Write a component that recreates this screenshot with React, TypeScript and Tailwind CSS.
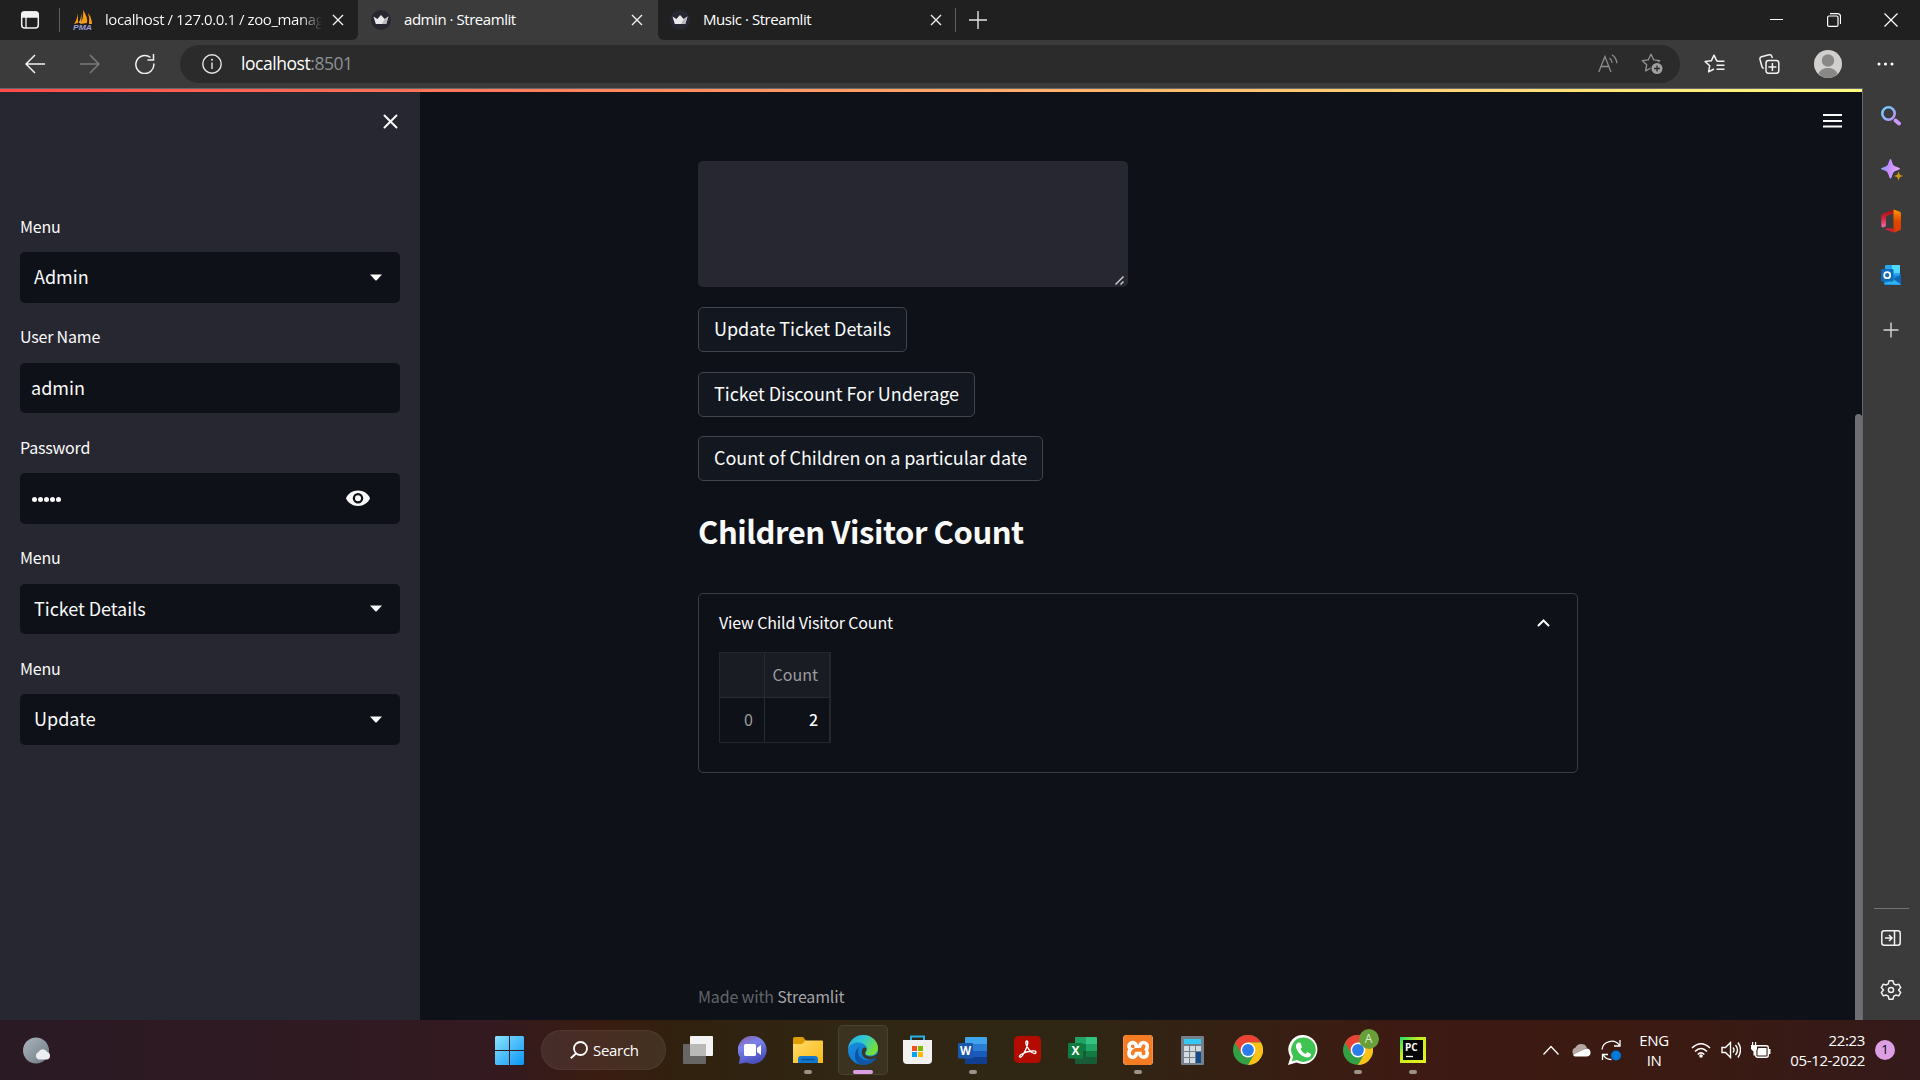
import React from "react";
import { SiXampp } from "react-icons/si";

type IconProps = { w: number; h: number; vb?: string; className?: string; children: React.ReactNode };

function Icon({ w, h, vb, className = "", children }: IconProps) {
  return (
    <svg width={w} height={h} viewBox={vb ?? `0 0 ${w} ${h}`} fill="none" className={`block shrink-0 ${className}`}>
      {children}
    </svg>
  );
}

function Crown() {
  return (
    <Icon w={20} h={20}>
      <circle cx="10" cy="10" r="10" fill="#262730" />
      <path d="M2.500 6.500 6.300 9 10 5l3.700 4 3.800-2.500-2.300 7.500H4.800Z" fill="#e9e9ec" />
      <path d="M13.700 9l3.800-2.500-2.300 7.500H11Z" fill="#b9b9be" />
    </Icon>
  );
}

function TabClose() {
  return (
    <Icon w={12} h={12}>
      <path d="M1 1l10 10M11 1L1 11" stroke="#f0f0f0" strokeWidth="1.400" />
    </Icon>
  );
}

function PmaIcon() {
  return (
    <Icon w={20} h={20}>
      <path d="M5 3v10L1 14Q4 10 5 3ZM10 0q5 7 4 13l-7 1Q11 8 10 0ZM15 3q4 5 4 11h-3q1-6-1-11Z" fill="#f89c0e" />
      <path d="M8.500 3v10H5.500Q8 9 8.500 3Z" fill="#d9a25a" />
      <text x="0" y="19.500" fontSize="8" fontWeight="700" fontStyle="italic" textLength="19" lengthAdjust="spacingAndGlyphs" fill="#9a9ed8" fontFamily="Liberation Sans">PMA</text>
    </Icon>
  );
}

function TabStrip() {
  return (
    <div className="flex h-10 shrink-0 items-center bg-[#3b3b3b]">
      <div className="flex h-10 w-[358px] items-center rounded-br-md bg-[#202020] pl-5">
        <Icon w={20} h={20}>
          <rect x="1.700" y="2" width="16.600" height="16" rx="3" stroke="#f2f2f2" strokeWidth="1.500" />
          <path d="M2 3.500Q2 2 4 2h12q2 0 2 2v3H2ZM6 7v11" fill="#f2f2f2" stroke="#f2f2f2" strokeWidth="1.300" />
        </Icon>
        <div className="ml-[19px] h-6 w-px bg-[#5f5f5f]" />
        <div className="ml-[13px]"><PmaIcon /></div>
        <div className="ml-3 w-[217px] whitespace-nowrap bg-gradient-to-r from-white from-90% to-transparent bg-clip-text pb-[2px] text-[15px] leading-6 tracking-[-0.42px] text-transparent">
          localhost / 127.0.0.1 / zoo_mana<span className="tracking-[-1px]">g</span>
        </div>
        <div className="ml-[10px]"><TabClose /></div>
      </div>
      <div className="flex h-10 w-[300px] items-center rounded-t-lg bg-[#3b3b3b] pl-[13px]">
        <Crown />
        <div className="ml-[13px] w-[227px] whitespace-nowrap pb-[2px] text-[15px] leading-6 tracking-[-0.45px] text-white">admin · Streamlit</div>
        <TabClose />
      </div>
      <div className="flex h-10 flex-1 items-center rounded-bl-md bg-[#202020] pl-[12px]">
        <Crown />
        <div className="ml-[13px] w-[227px] whitespace-nowrap pb-[2px] text-[15px] leading-6 tracking-[-0.45px] text-white">Music · Streamlit</div>
        <TabClose />
        <div className="ml-[13px] h-6 w-px bg-[#5f5f5f]" />
        <Icon w={18} h={18} className="ml-[13px]">
          <path d="M9 0v18M0 9h18" stroke="#e4e4e4" strokeWidth="1.400" />
        </Icon>
        <div className="ml-auto mr-[22px] flex items-center gap-[43px]">
          <Icon w={14} h={14}><path d="M0 6.500h13" stroke="#fff" /></Icon>
          <Icon w={14} h={14}>
            <rect x=".6" y="3" width="10.400" height="10.400" rx="1.500" stroke="#fff" strokeWidth="1.200" />
            <path d="M3 .6h7.500q3 0 3 3V11" stroke="#fff" strokeWidth="1.200" />
          </Icon>
          <Icon w={14} h={14}><path d="M.5.500l13 13M13.500.500l-13 13" stroke="#fff" strokeWidth="1.200" /></Icon>
        </div>
      </div>
    </div>
  );
}

const STAR = "M10 1.200l2.700 5.600 6.100.8-4.500 4.200 1.100 6.100L10 15l-5.400 2.900 1.100-6.100L1.200 7.600l6.100-.8Z";

function Toolbar() {
  return (
    <div className="flex h-12 shrink-0 items-center bg-[#3b3b3b] pl-[25px]">
      <Icon w={20} h={20}><path d="M20 10H1M10 1L1 10l9 9" stroke="#f2f2f2" strokeWidth="1.500" /></Icon>
      <Icon w={20} h={20} className="ml-[35px]"><path d="M0 10h19M10 1l9 9-9 9" stroke="#7c7c7c" strokeWidth="1.500" /></Icon>
      <Icon w={20} h={20} className="ml-[35px]"><path d="M18.800 9.500a9 9 0 1 1-3.300-6M18.500 0v6h-6" stroke="#f2f2f2" strokeWidth="1.500" /></Icon>
      <div className="ml-[25px] flex h-[38px] w-[1500px] items-center rounded-full bg-[#2b2b2b] pl-[22px]">
        <Icon w={20} h={20}>
          <circle cx="10" cy="10" r="9.200" stroke="#e6e6e6" strokeWidth="1.400" />
          <path d="M10 8.500V15" stroke="#e6e6e6" strokeWidth="1.400" /><circle cx="10" cy="5.800" r="1" fill="#e6e6e6" />
        </Icon>
        <div className="ml-[19px] pb-[2px] text-[17.500px] leading-6 tracking-[-0.45px] text-white">localhost<span className="text-[#8d9096]">:8501</span></div>
        <div className="ml-auto mr-[16px] flex items-center gap-[23px]">
          <Icon w={20} h={20}>
            <path d="M.8 18L6.900 2.500 13 18M3 12.500h8M11.500 4q2.500 2 2.500 5M14 .8q4.500 3 4.800 8.500" stroke="#8c8c8c" strokeWidth="1.300" />
          </Icon>
          <Icon w={23} h={22}>
            <path d={STAR} stroke="#949494" strokeWidth="1.300" strokeLinejoin="round" />
            <circle cx="16" cy="15.500" r="6.500" fill="#2b2b2b" /><circle cx="16" cy="15.500" r="5.500" fill="#a0a0a0" />
            <path d="M16 12.500v6M13 15.500h6" stroke="#2b2b2b" strokeWidth="1.300" />
          </Icon>
        </div>
      </div>
      <Icon w={21} h={20} className="ml-[24px]">
        <path d="M13.500 7L12.700 6.800 10 1.200 7.300 6.800 1.200 7.600l4.500 4.200-1.100 6.100L10 15" stroke="#f2f2f2" strokeWidth="1.500" strokeLinejoin="round" />
        <path d="M13 7.300h7.500M12.500 11.300h8M12.500 15.300h8" stroke="#f2f2f2" strokeWidth="1.500" />
      </Icon>
      <Icon w={21} h={20} className="ml-[34px]">
        <rect x="7" y="6.500" width="12.800" height="12.800" rx="2.500" stroke="#f2f2f2" strokeWidth="1.500" />
        <path d="M13.400 9v8M9.400 13h8M4.800 14.500Q3.300 14 3 12.800L1 5.500q-.5-2 1.500-2.700l7.500-2q2-.4 2.800 1.400l.5 1.800" stroke="#f2f2f2" strokeWidth="1.500" />
      </Icon>
      <Icon w={28} h={28} className="ml-[34px]">
        <circle cx="14" cy="14" r="14" fill="#d2d0ce" /><circle cx="14" cy="10.500" r="6.200" fill="#8a8886" />
        <path d="M4.500 23.500Q7 18 14 18t9.500 5.500Q20 28 14 28T4.500 23.500Z" fill="#8a8886" />
      </Icon>
      <Icon w={18} h={4} className="ml-[35px]">
        <circle cx="2" cy="2" r="1.500" fill="#fff" /><circle cx="8.500" cy="2" r="1.500" fill="#fff" /><circle cx="15" cy="2" r="1.500" fill="#fff" />
      </Icon>
    </div>
  );
}

function Caret() {
  return <Icon w={12} h={7} className="ml-auto mr-[18px]"><path d="M0 .5h12L6.500 6.500h-1Z" fill="#fafafa" /></Icon>;
}

function Field({ label, children, inset }: { label: string; children: React.ReactNode; inset: string }) {
  return (
    <div className="flex h-[110.500px] flex-col">
      <div className="h-[35.500px] text-[16px] leading-[18px] tracking-[-0.2px] text-[#fafafa]">{label}</div>
      <div className={`flex h-[50.500px] items-center rounded-[5px] bg-[#0e1117] text-[18px] leading-6 text-[#fafafa] ${inset}`}>{children}</div>
    </div>
  );
}

function Sidebar() {
  return (
    <aside className="flex w-[420px] shrink-0 flex-col bg-[#262730] px-5 font-['Noto_Sans_CJK_SC',sans-serif]">
      <div className="flex h-[124.500px] justify-end pr-[2px] pt-[22px]">
        <Icon w={15} h={15}><path d="M1.500 1.500l12 12M13.500 1.500l-12 12" stroke="#fafafa" strokeWidth="2" strokeLinecap="round" /></Icon>
      </div>
      <Field label="Menu" inset="pl-[14px]"><span className="pb-[2px]">Admin</span><Caret /></Field>
      <Field label="User Name" inset="pl-[11px]"><span className="pb-[2px]">admin</span></Field>
      <Field label="Password" inset="pl-[12px]">
        <span className="flex gap-px pt-[2px]">
          {[0, 1, 2, 3, 4].map((i) => <span key={i} className="h-[5px] w-[5px] rounded-full bg-[#fafafa]" />)}
        </span>
        <Icon w={24} h={17} className="ml-auto mr-[30px]">
          <path d="M12 .5C6.500.500 2 3.500 0 8.200c2 4.700 6.500 7.700 12 7.700s10-3 12-7.700C22 3.500 17.500.500 12 .5Z" fill="#fafafa" />
          <circle cx="12" cy="8.200" r="5.200" fill="#0e1117" /><circle cx="12" cy="8.200" r="3" fill="#fafafa" />
        </Icon>
      </Field>
      <Field label="Menu" inset="pl-[14px]"><span className="pb-[2px] tracking-[-0.05px]">Ticket Details</span><Caret /></Field>
      <Field label="Menu" inset="pl-[14px]"><span className="pb-[2px]">Update</span><Caret /></Field>
    </aside>
  );
}

function Main() {
  const button = "flex h-[45px] items-center rounded-[5px] border border-[#41444c] bg-[#13171f] pb-[2px] pl-[15px] text-[18px] tracking-[-0.05px] text-[#fafafa] whitespace-nowrap";
  return (
    <main className="flex min-w-0 flex-1 bg-[#0e1117] font-['Noto_Sans_CJK_SC',sans-serif]">
      <div className="flex flex-1 flex-col pl-[278px]">
        <div className="mt-[69px] flex h-[126px] w-[430px] items-end justify-end rounded-[5px] bg-[#262730] p-[2px] pr-[4px]">
          <Icon w={9} h={9}><path d="M.5 8.500l8-8M5.500 8.500l3-3" stroke="#c9c9cc" strokeWidth="1.500" /></Icon>
        </div>
        <div className="mt-5 flex flex-col items-start gap-[19.500px]">
          <div className={`${button} w-[209px]`}>Update Ticket Details</div>
          <div className={`${button} w-[277px]`}>Ticket Discount For Underage</div>
          <div className={`${button} w-[345px]`}>Count of Children on a particular date</div>
        </div>
        <h2 className="mt-[26px] h-[86px] text-[31px] font-bold leading-[48px] tracking-[-0.45px] text-[#fafafa]">Children Visitor Count</h2>
        <section className="h-[180px] w-[880px] rounded-[5px] border border-[#3a3d44] px-5 pt-[16px]">
          <div className="flex h-6 items-center justify-between pr-[7px] text-[16px] leading-6 tracking-[-0.15px] text-[#fafafa]">
            <span>View Child Visitor Count</span>
            <Icon w={13} h={9}><path d="M1.500 7.500l5-5 5 5" stroke="#fafafa" strokeWidth="2" strokeLinecap="round" /></Icon>
          </div>
          <div className="mt-[18px] grid h-[91px] w-[112px] grid-cols-[45px_64px] grid-rows-[45px_44px] border border-r-2 border-[#24272d] text-right text-[16px] leading-[42px] text-[#9c9da1]">
            <div className="border-b border-r border-[#282b32] bg-[#1a1c23]" />
            <div className="border-b border-[#282b32] bg-[#1a1c23] pr-[11px]">Count</div>
            <div className="border-r border-[#282b32] pr-[11px]">0</div>
            <div className="pr-[11px] font-medium text-[#fafafa]">2</div>
          </div>
        </section>
        <footer className="mt-[211px] text-[16px] leading-6 tracking-[-0.17px] text-[#62656b]">Made with <span className="text-[#a4a5a9]">Streamlit</span></footer>
      </div>
      <div className="flex w-[32px] shrink-0 flex-col pt-[22px]">
        <Icon w={19} h={14}><path d="M0 1h19M0 7h19M0 12.500h19" stroke="#fafafa" strokeWidth="2.200" /></Icon>
      </div>
      <div className="mt-[322px] w-[7px] shrink-0 rounded-t bg-[#6d6f74]" />
    </main>
  );
}

function EdgeSidebar() {
  return (
    <div className="flex w-[57px] shrink-0 flex-col items-center bg-[#3b3b3b] pr-px">
      <svg width="0" height="0" className="absolute">
        <defs>
          <linearGradient id="srch" x2="1" y2="1"><stop stopColor="#70cbfb" /><stop offset=".55" stopColor="#8ab6fb" /><stop offset="1" stopColor="#c98df5" /></linearGradient>
          <linearGradient id="spark" x2="1" y2=".2"><stop stopColor="#62b4ff" /><stop offset=".4" stopColor="#bc8cff" /><stop offset="1" stopColor="#e5a5ff" /></linearGradient>
          <linearGradient id="off" x2="0" y2="1"><stop stopColor="#ff9a00" /><stop offset=".5" stopColor="#e34600" /><stop offset="1" stopColor="#d83b01" /></linearGradient>
          <linearGradient id="offl" x2="0" y2="1"><stop stopColor="#9e1014" /><stop offset=".5" stopColor="#d42539" /><stop offset="1" stopColor="#e872b4" /></linearGradient>
        </defs>
      </svg>
      <Icon w={20} h={20} className="mt-[18px]">
        <circle cx="7.500" cy="7.500" r="6.200" stroke="url(#srch)" strokeWidth="2.600" />
        <path d="M14.500 14.500l3.500 3" stroke="#cc97f8" strokeWidth="3.800" strokeLinecap="round" />
      </Icon>
      <Icon w={22} h={22} className="ml-px mt-[33px]">
        <path d="M9.500 0c1.200 0 1.700 5.200 3.400 6.600S19 8.800 19 9.800s-4.500 1.700-6.100 3.100-2.200 6.600-3.400 6.600-1.800-5.100-3.400-6.600S0 10.800 0 9.800s4.500-1.700 6.100-3.200S8.300 0 9.500 0Z" fill="url(#spark)" />
        <path d="M17.500 12.500l1.300 3.200 3.200 1.300-3.200 1.300-1.300 3.200-1.300-3.200L13 17l3.200-1.300Z" fill="#cc9410" />
      </Icon>
      <Icon w={20} h={24} className="mt-[28px]">
        <path d="M12.500.5L2 4.500Q.3 5.200.3 7v9.500Q.3 19 3 18.300l2-1.300V8.500q0-1.200 1.200-1.700l6.300-2Z" fill="url(#offl)" />
        <path d="M12.500.500l6 2q1.500.5 1.500 2.200v14.600q0 1.700-1.500 2.200l-6 2.200Z" fill="url(#off)" />
        <path d="M4.500 19.200h8v4.300L5.500 21q-1.500-.6-1-1.800Z" fill="#ce2031" />
      </Icon>
      <Icon w={20} h={20} className="mt-[32px]">
        <path d="M4 1q0-1 1-1h13q1 0 1 1v9H4Z" fill="#28a8ea" /><path d="M11 0h7q1 0 1 1v7h-8Z" fill="#50d9ff" />
        <path d="M3 10h17v9q0 1-1 1H4q-1 0-1-1Z" fill="#1490df" /><path d="M20 10v9L12 14Z" fill="#1066b5" /><path d="M3 19L20 19.700 12 14Z" fill="#32b0ee" />
        <rect y="4" width="12.500" height="12.500" rx="1.200" fill="#0f6cbd" />
        <circle cx="6.200" cy="10.200" r="3" stroke="#fff" strokeWidth="1.800" />
      </Icon>
      <Icon w={16} h={16} className="mt-[37px]"><path d="M8 .5v15M.5 8h15" stroke="#d6d6d6" strokeWidth="1.400" /></Icon>
      <div className="mt-[570px] h-px w-[35px] bg-[#737373]" />
      <Icon w={20} h={16} className="mt-[21px]">
        <rect x=".8" y=".8" width="18.400" height="14.400" rx="2.500" stroke="#f2f2f2" strokeWidth="1.500" />
        <path d="M13.500 1v14M4 8h6.500M8 5l3 3-3 3" stroke="#f2f2f2" strokeWidth="1.500" />
      </Icon>
      <Icon w={22} h={22} vb="0 0 24 24" className="mt-[33px]">
        <path d="M9.800 2h4.400l.8 3.200 2.200 1.300 3.200-.9 2.200 3.800L20.200 12l2.400 2.600-2.200 3.800-3.200-.9-2.200 1.300-.8 3.200H9.800L9 18.800l-2.200-1.300-3.200.9-2.200-3.800L3.800 12 1.400 9.400l2.200-3.800 3.200.9L9 5.200Z" stroke="#f2f2f2" strokeWidth="1.600" strokeLinejoin="round" />
        <circle cx="12" cy="12" r="2.800" stroke="#f2f2f2" strokeWidth="1.600" />
      </Icon>
    </div>
  );
}

function Chrome() {
  return (
    <>
      <circle cx="15" cy="15" r="15" fill="#34a046" />
      <path d="M2 7.500A15 15 0 0 1 28 7.500H15L8.500 18.700Z" fill="#ea4335" />
      <path d="M28 7.500A15 15 0 0 1 15 30l6.500-11.200L15 7.500Z" fill="#fbc116" />
      <circle cx="15" cy="15" r="7.400" fill="#fff" /><circle cx="15" cy="15" r="5.900" fill="#2b7de9" />
    </>
  );
}

function Slot({ children, dot }: { children: React.ReactNode; dot?: boolean }) {
  return (
    <div className="flex h-[60px] w-[55px] shrink-0 flex-col items-center">
      <div className="flex h-[50px] items-end pb-[4px]"><div className="flex h-[32px] items-center">{children}</div></div>
      {dot && <div className="h-1 w-2 rounded-full bg-[#9b9389]" />}
    </div>
  );
}

function Taskbar() {
  return (
    <div className="flex h-[60px] shrink-0 bg-[linear-gradient(90deg,#2a1a24_0px,#301a22_340px,#341a20_500px,#3a1c10_600px,#31210f_680px,#302613_840px,#302614_1080px,#352013_1230px,#3d1a13_1400px,#3a1a12_1700px,#341a1b_1920px)]">
      <svg width="0" height="0" className="absolute">
        <defs>
          <linearGradient id="moon" x2="1" y2="1"><stop stopColor="#adb6be" /><stop offset="1" stopColor="#6c7882" /></linearGradient>
          <linearGradient id="win" x2="1" y2="1"><stop stopColor="#8be3ff" /><stop offset="1" stopColor="#0a96f5" /></linearGradient>
          <linearGradient id="chat" x2=".4" y2="1"><stop stopColor="#8a5a9e" /><stop offset=".4" stopColor="#7b83eb" /><stop offset="1" stopColor="#4b50c0" /></linearGradient>
          <linearGradient id="fold" x2="1" y2="1"><stop stopColor="#ffdc6e" /><stop offset="1" stopColor="#fcb912" /></linearGradient>
          <linearGradient id="edgeTop" x2="1" y2=".5"><stop stopColor="#2aa9e0" /><stop offset=".5" stopColor="#30c8d0" /><stop offset="1" stopColor="#74e238" /></linearGradient>
          <linearGradient id="edgeMid" x2=".5" y2="1"><stop stopColor="#1c90da" /><stop offset="1" stopColor="#0d78d4" /></linearGradient>
          <linearGradient id="pc" x2="1" y2="1"><stop stopColor="#1ddb6b" /><stop offset=".4" stopColor="#c6ee20" /><stop offset="1" stopColor="#e8f11e" /></linearGradient>
        </defs>
      </svg>
      <div className="flex w-[482px] items-center pl-[23px]">
        <Icon w={29} h={27}>
          <circle cx="13" cy="13.500" r="13" fill="url(#moon)" />
          <path d="M15.500 22.500a4 4 0 0 1 0-7.500 4.800 4.800 0 0 1 8.700 0 3.900 3.900 0 0 1 0 7.500Z" fill="#eceef2" />
        </Icon>
      </div>
      <Slot>
        <Icon w={29} h={29}><path d="M1 0h13v14H0V1ZM15 0h13l1 1v13H15ZM0 15h14v14H1l-1-1ZM15 15h14v13l-1 1H15Z" fill="url(#win)" /></Icon>
      </Slot>
      <div className="ml-1 mt-[10px] flex h-10 w-[125px] items-center rounded-full border border-white/5 bg-white/8 pl-[28px] text-[15px] text-white">
        <Icon w={18} h={18}><circle cx="10.500" cy="7.500" r="6.500" stroke="#fff" strokeWidth="1.800" /><path d="M6 12.500L.8 17.200" stroke="#fff" strokeWidth="1.900" /></Icon>
        <span className="ml-[5px] tracking-[-0.3px]">Search</span>
      </div>
      <div className="ml-[4px] flex">
        <Slot><Icon w={30} h={28}><rect x="7" width="23" height="20" rx="1" fill="#f3f3f3" /><rect y="8" width="23" height="20" rx="1" fill="#676664" /><path d="M7 8h16v12H7Z" fill="#b9b9b8" /></Icon></Slot>
        <Slot>
          <Icon w={29} h={28}>
            <path d="M14.500 0a14 14 0 1 1-6 26.600L1 28l1-6.500A14 14 0 0 1 14.500 0Z" fill="url(#chat)" />
            <rect x="6" y="8" width="12" height="12" rx="1.500" fill="#fff" /><path d="M19 12l4-3v10l-4-3Z" fill="#fff" />
          </Icon>
        </Slot>
        <Slot dot>
          <Icon w={30} h={27}>
            <path d="M0 2q0-2 2-2h8l3 3.500V9H0Z" fill="#dd9c00" /><path d="M0 7h9l3.500-3.500H29q1 0 1 1V26H0Z" fill="url(#fold)" />
            <path d="M5 26v-4q0-3 3-3h14q3 0 3 3v4Z" fill="#1379cf" /><path d="M9 22.500h12" stroke="#0b4f94" strokeWidth="1.500" strokeLinecap="round" />
          </Icon>
        </Slot>
        <div className="flex w-[55px] justify-center">
          <div className="mt-[5px] flex h-[50px] w-[50px] flex-col items-center rounded-[5px] border border-white/8 bg-white/6 pt-[9px]">
            <Icon w={30} h={30}>
              <circle cx="15" cy="15" r="15" fill="url(#edgeMid)" />
              <path d="M.2 13.500C1 5.500 7.500 0 15.200 0 24 0 30 6.500 30 13c0 5-3.500 7.500-7.500 7.500-4 0-5.500-1.300-5-2.700.6-1.300 1.300-1.800 1.300-4C18.800 10 14.500 7.500 10 7.500 5 7.500 1.500 10 .2 13.500Z" fill="url(#edgeTop)" />
              <path d="M12 11.500c-2 2-2.500 5-1.500 8 1.500 4.500 7 6.500 11 5.500 3-.7 5-2 5.800-2.200.8-.2 1 .4.6 1C25 28 20 30 16 30 9 30 6.500 24 7 20c.4-4 2-7 5-8.500Z" fill="#0e55a5" />
              <path d="M17 18.500c0 2 3 3.500 6.500 3 3-.4 5-1.800 6.200-3.500.2 2-1 4-2 5-4 2-9 2-12-1-2.300-2.500-2.500-6-1-8.500 1-1.500 3-1.500 3.800 0 .2 2.500-1.500 3-1.500 5Z" fill="#3a3728" />
            </Icon>
            <div className="mt-[5px] h-1 w-5 shrink-0 rounded-full bg-[#dd9fe4]" />
          </div>
        </div>
        <Slot>
          <Icon w={29} h={30}>
            <path d="M8 6V1.500h13V6" stroke="#28b0e8" strokeWidth="2" /><path d="M0 5h29v20q0 4-4 4H4q-4 0-4-4Z" fill="#f1f1f1" />
            <path d="M9 11h5v5H9Z" fill="#f25022" /><path d="M15 11h5v5h-5Z" fill="#7fba00" /><path d="M9 17h5v5H9Z" fill="#00a4ef" /><path d="M15 17h5v5h-5Z" fill="#ffb900" />
          </Icon>
        </Slot>
        <Slot dot>
          <Icon w={29} h={27}>
            <path d="M7 1q0-1 1-1h20q1 0 1 1v6H7Z" fill="#41a5ee" /><path d="M7 7h22v7H7Z" fill="#2b7cd3" /><path d="M7 14h22v6H7Z" fill="#185abd" /><path d="M7 20h22v6q0 1-1 1H8q-1 0-1-1Z" fill="#103f91" />
            <rect y="6" width="15" height="15.500" rx="1.300" fill="#1b56ad" /><text x="7.500" y="18" fontSize="11.500" fontWeight="700" textAnchor="middle" fill="#fff">W</text>
          </Icon>
        </Slot>
        <Slot>
          <Icon w={27} h={27} className="mb-[2px]">
            <rect width="27" height="27" rx="4.500" fill="#b30b00" />
            <path d="M13 5q-2 0-.5 4.500Q14.500 14 18 16.500q3.500 2 4-.2.300-1.800-4-1.300-6 .4-11 3.500-2.500 2-1 2.700 1.500.5 4.500-5.200 3-5.500 3.200-9Q13.800 5 13 5Z" stroke="#fff" strokeWidth="1.400" />
          </Icon>
        </Slot>
        <Slot>
          <Icon w={29} h={27}>
            <path d="M7 1q0-1 1-1h10v7H7Z" fill="#21a366" /><path d="M18 0h10q1 0 1 1v6H18Z" fill="#33c481" /><path d="M7 7h11v7H7Z" fill="#107c41" /><path d="M18 7h11v7H18Z" fill="#21a366" /><path d="M7 14h11v6H7Z" fill="#185c37" /><path d="M18 14h11v6H18Z" fill="#107c41" /><path d="M7 20h22v6q0 1-1 1H8q-1 0-1-1Z" fill="#185c37" />
            <rect y="6" width="15" height="15.500" rx="1.300" fill="#107c41" /><text x="7.500" y="18" fontSize="12" fontWeight="700" textAnchor="middle" fill="#fff">X</text>
          </Icon>
        </Slot>
        <Slot dot><div className="h-[30px] w-[30px] overflow-hidden rounded-sm bg-white"><SiXampp size={30} color="#f57c23" /></div></Slot>
        <Slot>
          <Icon w={23} h={29}>
            <rect width="23" height="29" rx="1" fill="#75808b" /><path d="M3 3h17v5H3Z" fill="#35c8f4" />
            <path d="M3 10h5v5H3ZM9 10h5v5H9ZM15 10h5v5h-5ZM3 16h5v5H3ZM9 16h5v5H9ZM3 22h5v5H3ZM9 22h5v5H9Z" fill="#d3dae0" /><path d="M15 16h5v11h-5Z" fill="#124a8c" />
          </Icon>
        </Slot>
        <Slot><Icon w={30} h={30}><Chrome /></Icon></Slot>
        <Slot>
          <Icon w={30} h={30}>
            <path d="M15.500 0a14.500 14.500 0 1 1-7 27.500L0 30l2.500-8A14.500 14.500 0 0 1 15.500 0Z" fill="#fff" />
            <path d="M15.500 2.500a12.200 12.200 0 1 1-6.500 22.500L3.700 26.300 5.200 21.500A12.200 12.200 0 0 1 15.500 2.500Z" fill="#3fc351" />
            <path d="M11 7.500c-1.500 0-3.500 2-3 4.500 1 5 6 10 11 10.500 2.500.2 4.300-1.500 4-3.500l-3.500-2-2 2q-3.500-1.200-5-5l1.500-1.700-1.300-4Q12.200 7.500 11 7.500Z" fill="#fff" />
          </Icon>
        </Slot>
        <Slot dot>
          <div className="relative">
            <Icon w={30} h={30}><Chrome /></Icon>
            <div className="absolute -top-[6px] left-[16px] flex h-5 w-5 items-center justify-center rounded-full bg-[#689f38] text-[12px] text-[#dcedc8]">A</div>
          </div>
        </Slot>
        <Slot dot>
          <Icon w={26} h={26}><rect width="26" height="26" fill="url(#pc)" /><rect x="3" y="3" width="20" height="20" fill="#050505" /><text x="5" y="14" fontSize="10" fontWeight="700" fill="#fff">PC</text><path d="M6 19.500h7" stroke="#fff" strokeWidth="1.300" /></Icon>
        </Slot>
      </div>
      <div className="ml-auto flex items-center text-[15px] text-white">
        <Icon w={16} h={10}><path d="M.5 9.500L8 1.500l7.500 8" stroke="#fff" strokeWidth="1.300" /></Icon>
        <Icon w={20} h={14} className="ml-3">
          <path d="M4.500 13a4.500 4.500 0 0 1 0-8.500 6.500 6.500 0 0 1 11.500 0L8 10Z" fill="#b5a6a3" /><path d="M2 12L15 5.500a4 4 0 0 1 1 8H4.500Q3 13.500 2 12Z" fill="#fff" />
        </Icon>
        <Icon w={21} h={21} className="ml-[10px]">
          <path d="M1 9.500a9.500 9 0 0 1 17.500-4M19 0v6h-6M10.500 19.500A9 9 0 0 1 2 14.500M1.500 20v-5.500h5.500" stroke="#fff" strokeWidth="1.300" />
          <circle cx="15" cy="15.500" r="5" fill="#0078d7" />
        </Icon>
        <div className="ml-[14px] w-9 text-center leading-5 tracking-[-0.4px]">ENG<br />IN</div>
        <Icon w={20} h={16} className="ml-[19px]">
          <path d="M1 6q9-8.500 18 0M4 9.500q6-6 12 0M6.700 12.500q3.300-3.300 6.600 0" stroke="#fff" strokeWidth="1.600" /><circle cx="10" cy="14" r="1.800" fill="#fff" />
        </Icon>
        <Icon w={20} h={18} className="ml-[10px]">
          <path d="M1 6.500h3.500l5-5v15l-5-5H1ZM12 6.500q2 2.500 0 5M14.500 4q4 5 0 10M17 1.500q5 7.500 0 15" stroke="#fff" strokeWidth="1.400" />
        </Icon>
        <Icon w={20} h={17} className="ml-[10px]">
          <rect x="4.700" y="3.700" width="12.600" height="11.600" rx="2" stroke="#fff" strokeWidth="1.400" /><path d="M7.500 6h8v7.500H6.500V8Z" fill="#fff" /><path d="M18 7h1.500v5H18Z" fill="#fff" />
          <path d="M0 3h6v4L4 9.500v4H2.500v-4L0 7ZM1 0h1.200v3H1ZM4 0h1.200v3H4Z" fill="#fff" />
        </Icon>
        <div className="ml-[19px] w-[75px] whitespace-nowrap text-right leading-5 tracking-[-0.35px]">22:23<br />05-12-2022</div>
        <div className="ml-[10px] mr-[25px] flex h-5 w-5 items-center justify-center rounded-full bg-[#dd9fe4] text-[13px] text-black">1</div>
      </div>
    </div>
  );
}

export default function App() {
  return (
    <div className="flex h-[1080px] w-[1920px] flex-col overflow-hidden bg-[#3b3b3b] font-['Open_Sans',sans-serif]">
      <TabStrip />
      <Toolbar />
      <div className="flex min-h-0 flex-1">
        <div className="flex w-[1863px] shrink-0 flex-col border-r border-t border-[#66676a]">
          <div className="h-[3px] shrink-0 bg-[linear-gradient(90deg,#ff4b4b,#fffd80)]" />
          <div className="flex min-h-0 flex-1"><Sidebar /><Main /></div>
        </div>
        <EdgeSidebar />
      </div>
      <Taskbar />
    </div>
  );
}
